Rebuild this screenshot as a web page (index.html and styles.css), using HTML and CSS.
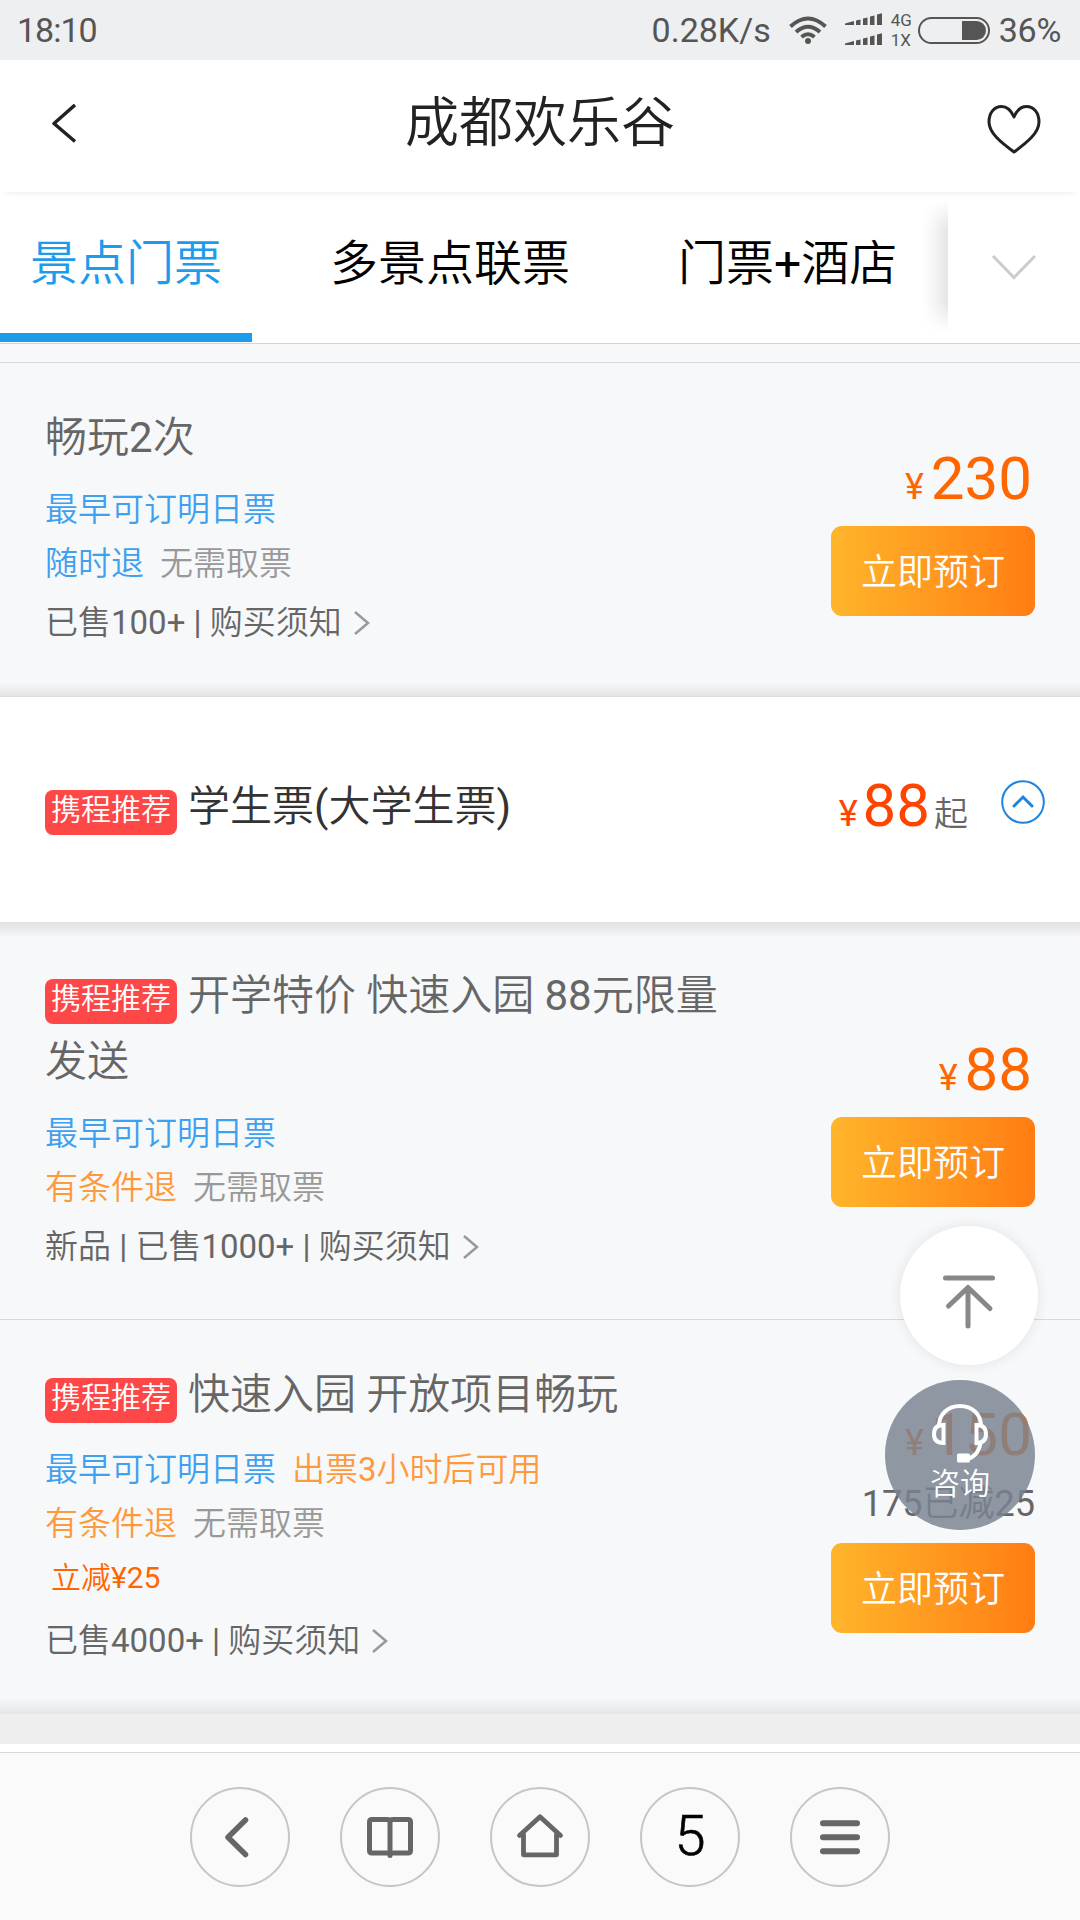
FILE: index.html
```html
<!DOCTYPE html>
<html lang="zh-CN">
<head>
<meta charset="utf-8">
<title>成都欢乐谷</title>
<link rel="stylesheet" href="styles.css">
</head>
<body>
<div class="status">
  <span class="status-time">18:10</span>
  <span class="status-speed">0.28K/s</span>
  <svg class="wifi" width="40" height="30" viewBox="0 0 40 30" fill="none" stroke="#555" stroke-width="4">
    <path d="M2.5 11.5Q20 -4.500 37.500 11.500M8 17Q20 6.500 32 17M13.500 22Q20 16.500 26.500 22"/>
    <circle cx="20" cy="26" r="3" fill="#555" stroke="none"/>
  </svg>
  <svg class="signal" width="38" height="34" viewBox="0 0 38 34" fill="#555">
    <path id="bars" d="M0 12v-1.500l9-2.500v4zM11 12V7.500l4.500-1v5.500zM18 12V5.500l4.500-1v7.500zM25 12V3.500l4.500-1v9.500zM32 12V1.500l5-1.200V12z"/>
    <use href="#bars" y="20"/>
  </svg>
  <span class="network"><span>4G</span><span>1X</span></span>
  <span class="battery"><span class="battery-level"></span></span>
  <span class="status-percent">36%</span>
</div>

<header class="header">
  <svg class="back" width="26" height="40" viewBox="0 0 26 40" fill="none" stroke="#222" stroke-width="3.500" stroke-linejoin="round"><path d="M24 1L3 19.500L24 37.500"/></svg>
  <h1>成都欢乐谷</h1>
  <svg class="heart" width="54" height="50" viewBox="0 0 54 50" fill="none" stroke="#222" stroke-width="3" stroke-linejoin="round"><path d="M27 13C24 6 20 2.500 14.500 2.500C7 2.500 2 9 2 18C2 29 14 38.500 27 48C40 38.500 52 29 52 18C52 9 47 2.500 39.500 2.500C34 2.500 30 6 27 13Z"/></svg>
</header>

<nav class="tabs">
  <div class="tab-list">
    <span class="tab active">景点门票</span>
    <span class="tab">多景点联票</span>
    <span class="tab">门票<span class="num">+</span>酒店</span>
  </div>
  <div class="more">
    <svg width="46" height="28" viewBox="0 0 46 28" fill="none" stroke="#ccc" stroke-width="3"><path d="M2 2L23 23.500L44 2"/></svg>
  </div>
</nav>

<main>
  <div class="strip"></div>
  <section class="ticket ticket-first">
    <div class="info">
      <h2>畅玩<span class="num">2</span>次</h2>
      <p class="tags"><span class="blue">最早可订明日票</span></p>
      <p class="tags"><span class="blue">随时退</span><span class="grey">无需取票</span></p>
      <p class="notes"><span>已售<span class="num">100+ | </span>购买须知</span><svg class="arrow" width="18" height="26" viewBox="0 0 18 26"><path d="M2 2L15 13L2 24"/></svg></p>
    </div>
    <div class="buy">
      <p class="price"><small>¥</small>230</p>
      <button>立即预订</button>
    </div>
  </section>

  <section class="group">
    <h2><span class="badge">携程推荐</span>学生票<span class="num">(</span>大学生票<span class="num">)</span></h2>
    <p class="price group-price"><small>¥</small>88<em>起</em></p>
    <svg class="collapse" width="44" height="44" viewBox="0 0 44 44" fill="none" stroke="#1c83e0"><circle cx="22" cy="22" r="20.800" stroke-width="2"/><path d="M13 26L22 17L31 26" stroke-width="3" stroke-linecap="round"/></svg>
  </section>

  <section class="ticket ticket-second">
    <div class="info">
      <h2><span class="badge">携程推荐</span>开学特价 快速入园 <span class="num">88</span>元限量发送</h2>
      <p class="tags"><span class="blue">最早可订明日票</span></p>
      <p class="tags"><span class="orange">有条件退</span><span class="grey">无需取票</span></p>
      <p class="notes"><span>新品<span class="num"> | </span>已售<span class="num">1000+ | </span>购买须知</span><svg class="arrow" width="18" height="26" viewBox="0 0 18 26"><path d="M2 2L15 13L2 24"/></svg></p>
    </div>
    <div class="buy">
      <p class="price"><small>¥</small>88</p>
      <button>立即预订</button>
    </div>
  </section>

  <section class="ticket ticket-third">
    <div class="info">
      <h2><span class="badge">携程推荐</span>快速入园 开放项目畅玩</h2>
      <p class="tags"><span class="blue">最早可订明日票</span><span class="orange">出票<span class="num">3</span>小时后可用</span></p>
      <p class="tags"><span class="orange">有条件退</span><span class="grey">无需取票</span></p>
      <p class="promo">立减<span class="num">¥25</span></p>
      <p class="notes"><span>已售<span class="num">4000+ | </span>购买须知</span><svg class="arrow" width="18" height="26" viewBox="0 0 18 26"><path d="M2 2L15 13L2 24"/></svg></p>
    </div>
    <div class="buy">
      <p class="price"><small>¥</small>150</p>
      <p class="saved"><span class="num">175</span>已减<span class="num">25</span></p>
      <button>立即预订</button>
    </div>
  </section>
  <div class="gap"></div>
</main>

<div class="to-top">
  <svg width="56" height="56" viewBox="0 0 56 56" fill="none" stroke="#888" stroke-width="5" stroke-linecap="round" stroke-linejoin="round"><path d="M4.500 5H51.500M27 53V14.500M7.500 33L27 14.500L49 35.500"/></svg>
</div>
<div class="consult">
  <svg width="60" height="60" viewBox="0 0 60 60" fill="none" stroke="#fff" stroke-width="4">
    <path d="M9 24V23C9 11 18 3 30 3S51 11 51 23V24M13.500 22V40C6 40 4 36 4 31S6 22 13.500 22ZM46.500 22V40C54 40 56 36 56 31S54 22 46.500 22ZM50.500 39C50 47 45 54 38 55.500"/>
    <rect x="27" y="50.500" width="13" height="9" rx="1.500" fill="#fff" stroke="none"/>
  </svg>
  <span>咨询</span>
</div>

<footer class="toolbar">
  <span class="tool"><svg width="60" height="60" viewBox="0 0 60 60"><path d="M35.500 13L18 30.200L35.500 47.500" stroke-width="5.500"/></svg></span>
  <span class="tool"><svg width="60" height="60" viewBox="0 0 60 60"><path d="M30 14V48.500M30 46H12Q9.500 46 9.500 43.500V15Q9.500 12.500 12 12.500H27Q30 12.500 30 15.500Q30 12.500 33 12.500H48Q50.500 12.500 50.500 15V43.500Q50.500 46 48 46H30" stroke-width="5"/></svg></span>
  <span class="tool"><svg width="60" height="60" viewBox="0 0 60 60"><path d="M9.500 28.500L30 9.800L50.500 28.500M13.500 27V47.800H46.500V27" stroke-width="4.800"/></svg></span>
  <span class="tool tool-count">5</span>
  <span class="tool"><svg width="60" height="60" viewBox="0 0 60 60"><path d="M13 16.200H47M13 30.200H47M13 44.200H47" stroke-width="6"/></svg></span>
</footer>
</body>
</html>
```
FILE: styles.css
```css
* { box-sizing: border-box; margin: 0; padding: 0; }
body {
  position: relative;
  display: flex;
  flex-direction: column;
  width: 1080px;
  height: 1920px;
  overflow: hidden;
  background: #fff;
  font-family: Roboto, "Noto Sans CJK SC", sans-serif;
  font-weight: 350;
}
svg { display: block; flex: none; }
h1, h2 { font-weight: 350; }
.num { font-weight: 400; }

.status {
  display: flex;
  align-items: center;
  flex: none;
  height: 60px;
  padding: 0 19px 0 17px;
  background: #eeeff1;
  color: #555;
  font-size: 34px;
  line-height: 60px;
  font-weight: 400;
}
.status-time { letter-spacing: -1px; }
.status-speed { margin-left: auto; margin-right: 17px; }
.status-percent { letter-spacing: -.3px; }
.signal { margin-left: 17px; }
.network {
  display: flex;
  flex-direction: column;
  width: 27px;
  margin-left: 8px;
  font-size: 17px;
  line-height: 20px;
}
.battery {
  display: flex;
  justify-content: flex-end;
  width: 72px;
  height: 27px;
  margin-right: 9px;
  padding: 2px;
  border: 2px solid #555;
  border-radius: 14px;
}
.battery-level { width: 24px; background: #555; border-radius: 0 10px 10px 0; }

.header {
  position: relative;
  z-index: 1;
  display: flex;
  justify-content: space-between;
  flex: none;
  height: 132px;
  padding: 44px 39px 0 51px;
  background: #fff;
  color: #222;
  box-shadow: 0 6px 6px -5px rgba(0, 0, 0, .08);
}
.header h1 { margin-top: -16px; margin-left: 16px; font-size: 54px; line-height: 72px; }
.heart { width: 54px; }

.tabs {
  display: flex;
  flex: none;
  height: 152px;
  border-bottom: 1px solid #d0d4d8;
  overflow: hidden;
}
.tab-list { display: flex; gap: 48px; width: 948px; overflow: hidden; }
.tab {
  flex: none;
  height: 150px;
  padding: 0 30px;
  border-bottom: 9px solid transparent;
  color: #000;
  font-size: 48px;
  line-height: 143px;
}
.tab.active { color: #1d9cec; border-bottom-color: #1d9cec; }
.more {
  position: relative;
  display: flex;
  align-items: center;
  justify-content: center;
  width: 132px;
  height: 150px;
  padding-top: 2px;
  background: #fff;
}
.more::before {
  content: "";
  position: absolute;
  left: -26px;
  top: 8px;
  width: 26px;
  height: 132px;
  background: linear-gradient(90deg, transparent, rgba(0, 0, 0, .03) 40%, rgba(0, 0, 0, .1));
  -webkit-mask-image: linear-gradient(transparent, #000 22%, #000 78%, transparent);
  mask-image: linear-gradient(transparent, #000 22%, #000 78%, transparent);
}

main { flex: none; }
.strip { height: 19px; background: #f7f8fa; border-bottom: 1px solid #d7d9db; }
.ticket {
  display: flex;
  justify-content: space-between;
  padding: 42px 45px 0 45px;
  background: #f7f8fa;
}
.ticket-first {
  height: 334px;
  border-bottom: 1px solid #dcdddf;
  background: linear-gradient(#f7f8fa 319px, #e4e5e7 333px);
}
.ticket-second {
  height: 398px;
  padding-top: 41px;
  border-bottom: 1px solid #d7d9db;
  background: linear-gradient(#e3e3e4, #e7e7e9 5px, #f7f8fa 15px);
}
.ticket-third {
  height: 394px;
  background: linear-gradient(#f7f8fa 378px, #e4e5e6 394px);
}
.info { width: 690px; }
.info h2 { margin-bottom: 12px; color: #666; font-size: 42px; line-height: 66px; }
.tags { display: flex; gap: 16px; font-size: 33px; line-height: 54px; }
.blue { color: #3fa0ee; }
.orange { color: #ff9a3c; }
.grey { color: #999; }
.notes {
  display: flex;
  align-items: center;
  gap: 11px;
  margin-top: 5px;
  color: #666;
  font-size: 33px;
  line-height: 54px;
}
.arrow { fill: none; stroke: #999; stroke-width: 2.500; }
.ticket-third .info h2 { margin-bottom: 15px; }
.ticket-third .notes { margin-top: 8px; }
.promo { padding-left: 6px; color: #f60; font-size: 30px; line-height: 54px; margin-bottom: 9px; }
.ticket-third .promo + .notes { margin-top: 0; }

.badge {
  display: inline-block;
  height: 45px;
  margin-right: 11px;
  padding: 0 6px;
  border-radius: 8px;
  background: #fe4747;
  color: #fff;
  font-size: 30px;
  line-height: 40px;
  vertical-align: 1px;
}

.buy { display: flex; flex-direction: column; align-items: flex-end; padding-top: 44px; }
.ticket-second .buy { padding-top: 77px; }
.ticket-third .buy { padding-top: 43px; }
.price {
  height: 60px;
  margin-bottom: 17px;
  padding-right: 3px;
  color: #f60;
  font-size: 60px;
  line-height: 60px;
  font-weight: 400;
}
.price small { margin-right: 7px; font-size: 36px; line-height: 0; }
.saved { margin-bottom: 17px; color: #666; font-size: 36px; line-height: 44px; }
.buy button {
  width: 204px;
  height: 90px;
  padding-bottom: 5px;
  border: 0;
  border-radius: 11px;
  background: linear-gradient(90deg, #ffb52b, #ff7d13);
  color: #fff;
  font: inherit;
  font-size: 36px;
}

.group {
  display: flex;
  height: 225px;
  padding: 77px 35px 0 45px;
  background: #fff;
}
.group h2 { color: #333; font-size: 42px; line-height: 66px; }
.group-price { margin: 2px 33px 0 auto; padding: 0; color: #ff4400; }
.group-price small { margin-right: 5px; }
.group-price em { margin-left: 4px; color: #666; font-style: normal; font-weight: 350; font-size: 34px; line-height: 0; }
.collapse { margin-top: 6px; }

.gap { height: 38px; background: #eee; border-bottom: 8px solid #fff; }

.to-top {
  position: absolute;
  left: 900px;
  top: 1226px;
  display: grid;
  place-items: center;
  width: 138px;
  height: 139px;
  padding: 10px 1px 0 0;
  border-radius: 50%;
  background: #fff;
  box-shadow: 0 0 14px rgba(0, 0, 0, .09);
}
.consult {
  position: absolute;
  left: 885px;
  top: 1380px;
  display: flex;
  flex-direction: column;
  align-items: center;
  width: 150px;
  height: 150px;
  padding-top: 23px;
  border-radius: 50%;
  background: rgba(122, 131, 145, .83);
  color: #fff;
  font-size: 30px;
  line-height: 42px;
}

.toolbar {
  display: flex;
  justify-content: center;
  gap: 50px;
  flex: 1;
  padding-top: 34px;
  border-top: 1px solid #d8d8d8;
  background: #fafafa;
}
.tool {
  display: grid;
  place-items: center;
  width: 100px;
  height: 100px;
  border: 2px solid #c6c6c6;
  border-radius: 50%;
}
.tool svg { fill: none; stroke: #666; stroke-linecap: round; stroke-linejoin: round; }
.tool-count { color: #000; font-size: 56px; line-height: 92px; padding-bottom: 3px; -webkit-text-stroke: .6px #000; }
```
